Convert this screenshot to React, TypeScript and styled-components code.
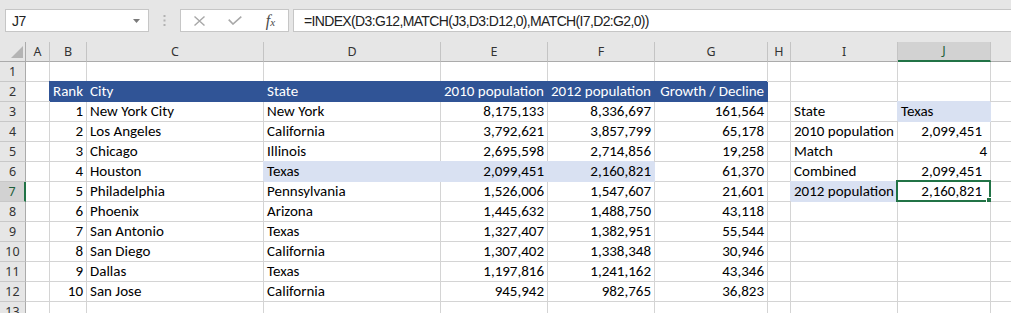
import React from "react";
import styled, { createGlobalStyle, css } from "styled-components";

const GRID = "26px 24px 37px 177px 177px 107px 107px 113px 23px 107px 93px 64px";
const GREEN = "#217346";
const HDR = "#305496";
const HL = "#d9e1f2";
const GRIDLINE = "#d4d4d4";
const HEAD_BG = "#e6e6e6";
const HEAD_SEL = "#d2d2d2";

const GlobalStyle = createGlobalStyle`
  html, body { margin: 0; padding: 0; }
  body { background: #fff; width: 1011px; height: 313px; overflow: hidden; }
`;

const Window = styled.div`
  width: 1011px;
  height: 313px;
  overflow: hidden;
  background: #fff;
`;

/* ---------- formula bar ---------- */
const FormulaBar = styled.div`
  box-sizing: border-box;
  height: 42px;
  background: ${HEAD_BG};
  display: flex;
  align-items: flex-start;
  padding: 9px 0 0 5px;
`;

const NameBox = styled.div`
  box-sizing: border-box;
  width: 144px;
  height: 23px;
  background: #fff;
  border: 1px solid #c6c6c6;
  display: flex;
  align-items: center;
  justify-content: space-between;
  padding: 0 8px 0 6px;
  font-family: "Liberation Sans", Arial, sans-serif;
  font-size: 14px;
  letter-spacing: -0.4px;
  color: #222;
`;

const Grip = styled.div`
  width: 31px;
  height: 23px;
  display: flex;
  align-items: center;
  justify-content: center;
`;

const ButtonGroup = styled.div`
  box-sizing: border-box;
  width: 109px;
  height: 23px;
  background: #fff;
  border: 1px solid #c6c6c6;
  display: grid;
  grid-template-columns: 36px 36px 35px;
  align-items: center;
  justify-items: center;
`;

const FxLabel = styled.span`
  font-family: "Liberation Serif", "Times New Roman", serif;
  font-style: italic;
  color: #4a4a4a;
  font-size: 16px;
  line-height: 1;
  & > small {
    font-size: 11px;
  }
`;

const FormulaInput = styled.div`
  box-sizing: border-box;
  flex: 1;
  height: 23px;
  margin-left: 4px;
  margin-right: -2px;
  background: #fff;
  border: 1px solid #c6c6c6;
  padding-left: 10px;
  display: flex;
  align-items: center;
  font-family: "Liberation Sans", Arial, sans-serif;
  font-size: 14px;
  letter-spacing: -0.65px;
  color: #222;
  white-space: nowrap;
  overflow: hidden;
`;

/* ---------- sheet ---------- */
const Sheet = styled.div`
  width: 1011px;
  overflow: hidden;
`;

const GridRow = styled.div`
  display: grid;
  grid-template-columns: ${GRID};
  height: 20px;
`;

const headFont = css`
  font-family: "Segoe UI", "Noto Sans", sans-serif;
  font-size: 12.5px;
  text-align: center;
`;

const Corner = styled.div`
  box-sizing: border-box;
  height: 20px;
  background: ${HEAD_BG};
  border-right: 1px solid #ababab;
  border-bottom: 1px solid #ababab;
  display: flex;
  align-items: flex-end;
  justify-content: flex-end;
  padding: 0 2px 3px 0;
`;

const ColHead = styled.div<{ $sel?: boolean }>`
  box-sizing: border-box;
  height: 20px;
  background: ${(p) => (p.$sel ? HEAD_SEL : HEAD_BG)};
  border-right: 1px solid #c4c4c4;
  border-bottom: ${(p) => (p.$sel ? `2px solid ${GREEN}` : "1px solid #ababab")};
  color: ${(p) => (p.$sel ? "#1d5e39" : "#333")};
  line-height: ${(p) => (p.$sel ? "18px" : "19px")};
  ${headFont}
`;

const RowHead = styled.div<{ $sel?: boolean }>`
  box-sizing: border-box;
  height: 20px;
  background: ${(p) => (p.$sel ? HEAD_SEL : HEAD_BG)};
  border-right: ${(p) => (p.$sel ? `2px solid ${GREEN}` : "1px solid #ababab")};
  border-bottom: 1px solid #c8c8c8;
  color: ${(p) => (p.$sel ? "#1d5e39" : "#333")};
  line-height: 19px;
  ${headFont}
`;

type Fill = "hdr" | "hl" | undefined;

const fillColor = (f: Fill) => (f === "hdr" ? HDR : f === "hl" ? HL : undefined);

const Cell = styled.div<{ $right?: boolean; $fill?: Fill; $pr?: number }>`
  box-sizing: border-box;
  height: 20px;
  position: relative;
  border-right: 1px solid ${(p) => fillColor(p.$fill) ?? GRIDLINE};
  border-bottom: 1px solid ${(p) => fillColor(p.$fill) ?? GRIDLINE};
  background: ${(p) => fillColor(p.$fill) ?? "#fff"};
  box-shadow: ${(p) => (p.$fill ? `-1px -1px 0 0 ${fillColor(p.$fill)}` : "none")};
  color: ${(p) => (p.$fill === "hdr" ? "#fff" : "#000")};
  font-family: Calibri, Carlito, Lato, sans-serif;
  font-size: 15px;
  line-height: 19px;
  padding: 0 ${(p) => p.$pr ?? 3}px 0 3px;
  text-align: ${(p) => (p.$right ? "right" : "left")};
  white-space: nowrap;
`;

const CellText = styled.span`
  position: relative;
`;

const SelectionBox = styled.div`
  position: absolute;
  left: -2px;
  top: -2px;
  right: -1px;
  bottom: -1px;
  border: 2px solid ${GREEN};
  pointer-events: none;
`;

const FillHandle = styled.div`
  position: absolute;
  right: -3px;
  bottom: -3px;
  width: 5px;
  height: 5px;
  background: ${GREEN};
  border-top: 1px solid #fff;
  border-left: 1px solid #fff;
`;

type Spec = { t?: string; r?: boolean; f?: Fill; pr?: number; sel?: boolean };

// K's letter sits beyond the right edge of the window, so its header shows blank
const COLS = ["A", "B", "C", "D", "E", "F", "G", "H", "I", "J", ""];

const cities: [string, string, string, string, string][] = [
  ["New York City", "New York", "8,175,133", "8,336,697", "161,564"],
  ["Los Angeles", "California", "3,792,621", "3,857,799", "65,178"],
  ["Chicago", "Illinois", "2,695,598", "2,714,856", "19,258"],
  ["Houston", "Texas", "2,099,451", "2,160,821", "61,370"],
  ["Philadelphia", "Pennsylvania", "1,526,006", "1,547,607", "21,601"],
  ["Phoenix", "Arizona", "1,445,632", "1,488,750", "43,118"],
  ["San Antonio", "Texas", "1,327,407", "1,382,951", "55,544"],
  ["San Diego", "California", "1,307,402", "1,338,348", "30,946"],
  ["Dallas", "Texas", "1,197,816", "1,241,162", "43,346"],
  ["San Jose", "California", "945,942", "982,765", "36,823"],
];

const side: Record<number, [Spec, Spec]> = {
  3: [{ t: "State" }, { t: "Texas", f: "hl" }],
  4: [{ t: "2010 population" }, { t: "2,099,451", r: true, pr: 8 }],
  5: [{ t: "Match" }, { t: "4", r: true }],
  6: [{ t: "Combined" }, { t: "2,099,451", r: true, pr: 8 }],
  7: [{ t: "2012 population", f: "hl" }, { t: "2,160,821", r: true, pr: 8, sel: true }],
};

function buildRow(n: number): Spec[] {
  const row: Spec[] = Array.from({ length: 11 }, () => ({}));
  if (n === 2) {
    row[1] = { t: "Rank", r: true, f: "hdr" };
    row[2] = { t: "City", f: "hdr" };
    row[3] = { t: "State", f: "hdr" };
    row[4] = { t: "2010 population", r: true, f: "hdr" };
    row[5] = { t: "2012 population", r: true, f: "hdr" };
    row[6] = { t: "Growth / Decline", r: true, f: "hdr" };
  }
  if (n >= 3 && n <= 12) {
    const c = cities[n - 3];
    const hl: Fill = n === 6 ? "hl" : undefined;
    row[1] = { t: String(n - 2), r: true };
    row[2] = { t: c[0] };
    row[3] = { t: c[1], f: hl };
    row[4] = { t: c[2], r: true, f: hl };
    row[5] = { t: c[3], r: true, f: hl };
    row[6] = { t: c[4], r: true };
  }
  if (side[n]) {
    row[8] = side[n][0];
    row[9] = side[n][1];
  }
  return row;
}

const ROWS = Array.from({ length: 13 }, (_, i) => i + 1);

const CornerTriangle = () => (
  <svg width="12" height="12" viewBox="0 0 12 12">
    <polygon points="12,0 12,12 0,12" fill="#b4b4b4" />
  </svg>
);

const DropArrow = () => (
  <svg width="7" height="4" viewBox="0 0 7 4">
    <polygon points="0,0 7,0 3.5,4" fill="#7a7a7a" />
  </svg>
);

const GripDots = () => (
  <svg width="3" height="11" viewBox="0 0 3 11">
    <rect x="0.5" y="0" width="2" height="2" fill="#b2b2b2" />
    <rect x="0.5" y="4.5" width="2" height="2" fill="#b2b2b2" />
    <rect x="0.5" y="9" width="2" height="2" fill="#b2b2b2" />
  </svg>
);

const CancelIcon = () => (
  <svg width="11" height="10" viewBox="0 0 11 10">
    <path d="M0.5 0.5 L10.5 9.5 M10.5 0.5 L0.5 9.5" stroke="#a8a8a8" strokeWidth="1.4" fill="none" />
  </svg>
);

const EnterIcon = () => (
  <svg width="14" height="9" viewBox="0 0 14 9">
    <path d="M0.7 3.6 L5 8 L13.3 0.6" stroke="#a8a8a8" strokeWidth="1.6" fill="none" />
  </svg>
);

export default function App() {
  return (
    <Window>
      <GlobalStyle />
      <FormulaBar>
        <NameBox>
          <span>J7</span>
          <DropArrow />
        </NameBox>
        <Grip>
          <GripDots />
        </Grip>
        <ButtonGroup>
          <CancelIcon />
          <EnterIcon />
          <FxLabel>
            f<small>x</small>
          </FxLabel>
        </ButtonGroup>
        <FormulaInput>=INDEX(D3:G12,MATCH(J3,D3:D12,0),MATCH(I7,D2:G2,0))</FormulaInput>
      </FormulaBar>
      <Sheet>
        <GridRow>
          <Corner>
            <CornerTriangle />
          </Corner>
          {COLS.map((c, i) => (
            <ColHead key={i} $sel={c === "J"}>
              {c}
            </ColHead>
          ))}
        </GridRow>
        {ROWS.map((n) => (
          <GridRow key={n}>
            <RowHead $sel={n === 7}>{n}</RowHead>
            {buildRow(n).map((s, i) => (
              <Cell key={i} $right={s.r} $fill={s.f} $pr={s.pr}>
                {s.t && <CellText>{s.t}</CellText>}
                {s.sel && (
                  <SelectionBox>
                    <FillHandle />
                  </SelectionBox>
                )}
              </Cell>
            ))}
          </GridRow>
        ))}
      </Sheet>
    </Window>
  );
}
